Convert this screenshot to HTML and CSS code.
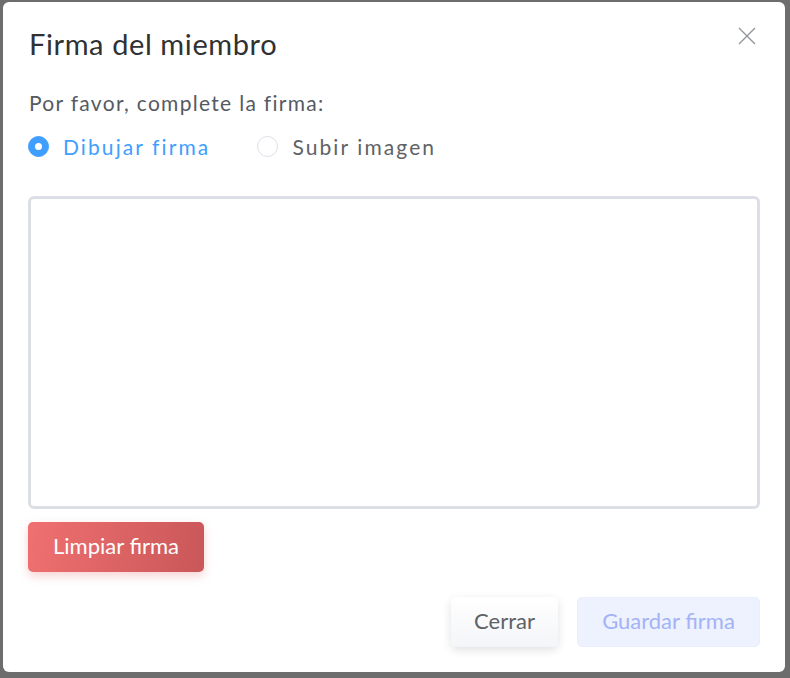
FILE: index.html
```html
<!DOCTYPE html>
<html lang="es">
<head>
<meta charset="utf-8">
<title>Firma del miembro</title>
<link rel="stylesheet" href="styles.css">
</head>
<body>
<div class="backdrop">
  <div class="modal">
    <div class="header">
      <h2 class="title">Firma del miembro</h2>
      <button class="close" aria-label="Cerrar">
        <svg width="18" height="18" viewBox="0 0 18 18"><path d="M1 1 L17 17 M17 1 L1 17" stroke="#909399" stroke-width="1.3" fill="none"/></svg>
      </button>
    </div>
    <p class="prompt">Por favor, complete la firma:</p>
    <div class="radios">
      <label class="radio checked"><span class="dot"></span><span class="label">Dibujar firma</span></label>
      <label class="radio"><span class="dot"></span><span class="label">Subir imagen</span></label>
    </div>
    <div class="pad"></div>
    <div class="clear-row"><button class="btn-clear">Limpiar firma</button></div>
    <div class="footer">
      <button class="btn-close">Cerrar</button>
      <button class="btn-save">Guardar firma</button>
    </div>
  </div>
</div>
</body>
</html>
```
FILE: styles.css
```css
* { box-sizing: border-box; }
html, body { margin: 0; padding: 0; }
body {
  width: 790px;
  height: 678px;
  background: #6d6d6d;
  font-family: "Lato", "Noto Sans", sans-serif;
  overflow: hidden;
}
.backdrop {
  padding: 2px 5px 6px 3px;
}
.modal {
  width: 782px;
  height: 670px;
  background: #ffffff;
  border-radius: 6px;
  padding: 0 25px 0 25px;
  display: flex;
  flex-direction: column;
}
.header {
  position: relative;
  padding-top: 25px;
}
.title {
  margin: 0 0 0 1px;
  font-weight: 400;
  font-size: 29px;
  line-height: 34px;
  color: #303133;
  letter-spacing: 0.6px;
}
.close {
  position: absolute;
  top: 25px;
  right: 4px;
  width: 18px;
  height: 18px;
  padding: 0;
  border: 0;
  background: none;
  display: block;
}
.close svg { display: block; }
.prompt {
  margin: 29px 0 0 1px;
  font-size: 21px;
  line-height: 26px;
  color: #555a63;
  letter-spacing: 1.3px;
}
.radios {
  display: flex;
  margin-top: 16px;
  height: 28px;
  align-items: center;
}
.radio {
  display: flex;
  align-items: center;
  margin-right: 47px;
}
.dot {
  width: 21px;
  height: 21px;
  border-radius: 50%;
  border: 1px solid #dcdfe6;
  background: #fff;
  position: relative;
}
.radio.checked .dot {
  border-color: #409eff;
  background: #409eff;
}
.radio.checked .dot::after {
  content: "";
  position: absolute;
  width: 7px;
  height: 7px;
  border-radius: 50%;
  background: #fff;
  left: 6px;
  top: 6px;
}
.label {
  margin-left: 14px;
  font-size: 21px;
  color: #606266;
  letter-spacing: 2.1px;
}
.radio.checked .label { color: #409eff; }
.pad {
  margin-top: 36px;
  height: 313px;
  border: 3px solid #dcdfe6;
  border-radius: 6px;
  background: #fff;
}
.clear-row { margin-top: 13px; }
.btn-clear {
  width: 176px;
  height: 50px;
  border: 0;
  border-radius: 5px;
  padding: 0 0 3px;
  background: linear-gradient(100deg, #f07070 0%, #c95759 100%);
  color: #fff;
  font-family: inherit;
  font-size: 22px;
  box-shadow: 0 4px 10px rgba(222, 80, 80, 0.25);
}
.footer {
  margin-top: 25px;
  display: flex;
  justify-content: flex-end;
  gap: 19px;
}
.footer button {
  height: 50px;
  border-radius: 5px;
  padding: 0 0 3px;
  font-family: inherit;
  font-size: 22px;
}
.btn-close {
  width: 107px;
  border: 0;
  background: linear-gradient(180deg, #ffffff 0%, #f4f5f8 100%);
  color: #606266;
  box-shadow: 0 3px 10px rgba(0, 0, 0, 0.12);
}
.btn-save {
  width: 183px;
  border: 1px solid #e9edfd;
  background: #eef1fe;
  color: #a3b3f5;
}
```
